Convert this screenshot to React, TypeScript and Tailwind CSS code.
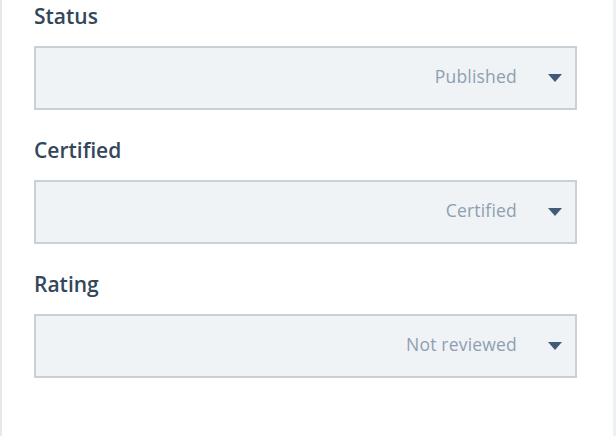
import React from "react";

const fields = [
  { label: "Status", value: "Published" },
  { label: "Certified", value: "Certified" },
  { label: "Rating", value: "Not reviewed" },
];

export default function App() {
  return (
    <div
      className="flex h-[436px] w-[616px] bg-white overflow-hidden"
      style={{ fontFamily: "'Open Sans', Lato, sans-serif" }}
    >
      <div className="w-[2px] bg-[#e5e9ed]" />
      <div className="flex-1 flex flex-col pl-[32px] pr-[36px] pt-[2px]">
        {fields.map((f) => (
          <div key={f.label} className="flex flex-col mb-[26px]">
            <div className="text-[21px] leading-[28px] font-semibold text-[#33475b] h-[44px]">
              {f.label}
            </div>
            <div className="h-[64px] bg-[#eff3f6] border-2 border-[#c9d0d6] flex items-center justify-end pr-[13px]">
              <span className="text-[17.5px] text-[#8e9fb1] mr-[31px] mb-[4px] tracking-[0.2px]">{f.value}</span>
              <svg width="14" height="8" viewBox="0 0 14 8">
                <polygon points="0,0 14,0 7,8" fill="#425b76" />
              </svg>
            </div>
          </div>
        ))}
      </div>
      <div className="w-[3px] bg-[#eef0f3]" />
    </div>
  );
}
